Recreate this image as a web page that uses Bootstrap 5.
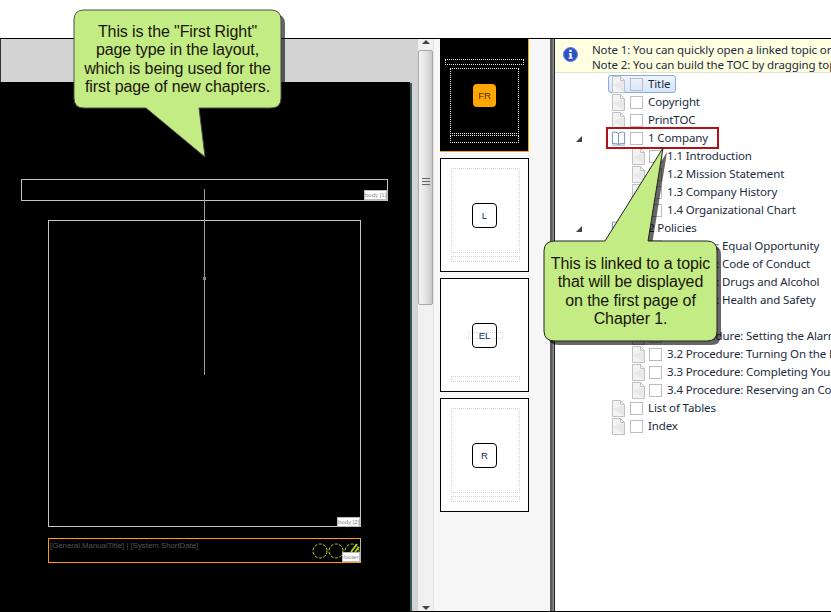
<!DOCTYPE html>
<html lang="en">
<head>
  <meta charset="UTF-8">
  <title>Page layout and TOC</title>
  <link href="https://cdn.jsdelivr.net/npm/bootstrap@5.3.0/dist/css/bootstrap.min.css" rel="stylesheet">
  <style>
    body { width: 831px; height: 612px; overflow: hidden; background: #fff; font-family: "Noto Sans", sans-serif; }
    .shot { width: 831px; height: 612px; position: relative; }
    .top-band { height: 38px; }
    .work { height: 574px; border-top: 1px solid #000; border-bottom: 1px solid #000; }

    /* layout canvas */
    .canvas-pane { width: 418px; background: #d3d3d3; position: relative; border-left: 1px solid #333; }
    .page-sheet { position: absolute; left: -1px; top: 43px; width: 410px; bottom: 0; background: #000; }
    .page-edge { position: absolute; left: 409px; top: 44px; width: 2px; bottom: 0; background: #2f5c5c; }
    .frame { position: absolute; border: 1px solid #c4c4c4; }
    .frame-header { left: 20px; top: 140px; width: 367px; height: 22px; }
    .frame-body { left: 47px; top: 181px; width: 313px; height: 307px; }
    .frame-footer { left: 47px; top: 499px; width: 313px; height: 25px; border-color: #ff9c00; border-right-color: #b5b5b5; }
    .v-guide { position: absolute; left: 203px; top: 150px; width: 1px; height: 186px; background: #9c9c9c; }
    .v-tick { position: absolute; left: 202px; top: 238px; width: 3px; height: 3px; background: #8a8a8a; }
    .tag { position: absolute; background: #fff; border: 1px solid #bbb; color: #8a8a8a; font: 6px/8px "Liberation Sans", sans-serif; text-align: center; white-space: nowrap; }
    .tag-h { left: 363px; top: 151px; width: 23px; height: 10px; }
    .tag-b { left: 336px; top: 478px; width: 23px; height: 10px; }
    .tag-f { left: 341px; top: 513px; width: 18px; height: 10px; }
    .foot-text { position: absolute; left: 49px; top: 502px; color: #555; font: 7.8px/10px "Liberation Sans", sans-serif; white-space: nowrap; }
    .foot-rings { position: absolute; left: 310px; top: 504px; }

    /* scrollbar */
    .vbar { width: 16px; background: #f0f0f0; position: relative; border-right: 1px solid #e4e4e4; }
    .vbar-thumb { position: absolute; left: 0; top: 11px; width: 15px; height: 255px; border: 1px solid #a8a8a8; border-radius: 2px; background: linear-gradient(90deg, #f4f4f4, #e2e2e2 55%, #c8c8c8); }
    .vbar-grip { position: absolute; left: 3px; top: 127px; width: 8px; height: 7px; border-top: 1px solid #666; border-bottom: 1px solid #666; }
    .vbar-grip::after { content: ""; display: block; height: 1px; margin-top: 2px; background: #666; }
    .arrow-up, .arrow-down { position: absolute; left: 4px; width: 0; height: 0; border-left: 4px solid transparent; border-right: 4px solid transparent; }
    .arrow-up { top: 1px; border-bottom: 4px solid #444; }
    .arrow-down { bottom: 1px; border-top: 4px solid #444; }

    /* page type thumbnails */
    .thumbs { width: 116px; background: #f7f7f7; padding-left: 6px; gap: 6px; }
    .thumb { width: 89px; height: 114px; background: #fff; border: 1px solid #000; position: relative; }
    .thumb-on { height: 113px; background: #000; border: 0; border-right: 1px solid #ffa500; border-bottom: 1px solid #ffa500; }
    .dots { position: absolute; border: 1px dotted #d4d4d4; }
    .thumb-on .dots { border-color: #e8e8e8; }
    .chip { position: absolute; left: 31px; top: 44px; width: 25px; height: 25px; border: 1px solid #000; border-radius: 4px; background: #fff; color: #103060; font: 9.5px/23px "Liberation Sans", sans-serif; text-align: center; }
    .chip-on { left: 33px; top: 45px; width: 23px; height: 23px; border: 0; background: #ffa500; color: #4a3000; }

    /* splitter */
    .splitter { width: 5px; background: linear-gradient(90deg, #5c5c5c 0 2px, #6e6e6e 2px 3px, #8c8c8c 3px 4px, #222 4px); }

    /* toc pane */
    .toc-pane { width: 276px; overflow: hidden; background: #fff; }
    .note-bar { height: 34px; background: #ffffe1; border-bottom: 1px solid #e4e4d0; padding: 3px 0 0 37px; position: relative; font-size: 11.5px; letter-spacing: -.12px; line-height: 15px; color: #1c2b3c; white-space: nowrap; }
    .note-icon { position: absolute; left: 8px; top: 8px; }
    .toc-list { padding-top: 2px; }
    .toc-row { height: 18px; position: relative; font-size: 11.5px; letter-spacing: -.12px; line-height: 18px; color: #1c2b3c; white-space: nowrap; display: flex; align-items: center; }
    .lvl-1 { padding-left: 57px; }
    .lvl-2 { padding-left: 77px; }
    .ico-doc { flex: none; margin-right: 4px; }
    .lvl-1 .ico-doc { margin-right: 5px; }
    .lvl-1 .ico-book { flex: none; margin-left: -1px; margin-right: 4px; }
    .box-mark { flex: none; width: 13px; height: 13px; border: 1px solid #bdbdbd; background: #fff; margin-right: 5px; }
    .twist { position: absolute; left: 21px; top: 7px; width: 0; height: 0; border-bottom: 6px solid #444; border-left: 6px solid transparent; }
    .sel-row::before { content: ""; position: absolute; left: 53px; top: 0; width: 68px; height: 18px; border: 1px solid #84acdd; border-radius: 3px; background: linear-gradient(#eef5fd, #d6e6f8); }
    .sel-row > * { position: relative; }
    .sel-row .box-mark { background: transparent; }
    .red-mark { position: absolute; left: 606px; top: 127px; width: 113px; height: 22px; border: 2px solid #b01217; }

    /* callouts */
    .bubble-art { position: absolute; left: 0; top: 0; }
    .bubble-text { position: absolute; text-align: center; font: 16px/18.3px "Liberation Sans", sans-serif; color: #1a1408; letter-spacing: -.1px; }
    .bubble-a { left: 74px; top: 23px; width: 207px; }
    .bubble-b { left: 544px; top: 255px; width: 173px; }
  </style>
</head>
<body>
  <svg width="0" height="0" class="position-absolute">
    <symbol id="doc" viewBox="0 0 13 17">
      <path d="M.5.5h8l4 4v12H.5z" fill="#f3f3f3" stroke="#c2c2c2"/>
      <path d="M8.5.5v4h4z" fill="#fff" stroke="#c2c2c2"/>
      <path d="M1 9l11 7V5z" fill="#e2e2e2" opacity=".7"/>
    </symbol>
    <symbol id="book" viewBox="0 0 16 17">
      <path d="M8 3C6 1.500 3.500 1.500 1.500 2v12c2-.5 4.500-.5 6.500 1 2-1.500 4.500-1.500 6.500-1V2C12.500 1.500 10 1.500 8 3z" fill="#fff" stroke="#6d8fae"/>
      <path d="M8 3v12" stroke="#6d8fae"/>
      <path d="M1 15.500h14" stroke="#8aa5bf"/>
    </symbol>
  </svg>

  <div class="shot">
    <div class="top-band"></div>
    <div class="work d-flex">
      <div class="canvas-pane">
        <div class="page-sheet"></div>
        <div class="page-edge"></div>
        <div class="frame frame-header"></div>
        <div class="frame frame-body"></div>
        <div class="frame frame-footer"></div>
        <div class="v-guide"></div>
        <div class="v-tick"></div>
        <div class="tag tag-h">body [1]</div>
        <div class="tag tag-b">body [2]</div>
        <div class="foot-text">[General.ManualTitle] | [System.ShortDate]</div>
        <svg class="foot-rings" width="50" height="16" fill="none" stroke="#b4d220" stroke-dasharray="3 1.500">
          <circle cx="9" cy="8" r="7"/><circle cx="25" cy="8" r="7"/><circle cx="41" cy="8" r="7"/>
          <path d="M40 9l6-8M44 9l4-5" stroke-dasharray="none" stroke-width="2"/>
        </svg>
        <div class="tag tag-f">footer</div>
      </div>

      <div class="vbar">
        <div class="arrow-up"></div>
        <div class="vbar-thumb"><div class="vbar-grip"></div></div>
        <div class="arrow-down"></div>
      </div>

      <div class="thumbs d-flex flex-column">
        <div class="thumb thumb-on">
          <div class="dots" style="left:5px;top:20px;width:79px;height:6px"></div>
          <div class="dots" style="left:10px;top:29px;width:69px;height:66px"></div>
          <div class="dots" style="left:10px;top:96px;width:69px;height:8px"></div>
          <div class="chip chip-on">FR</div>
        </div>
        <div class="thumb">
          <div class="dots" style="left:10px;top:9px;width:69px;height:85px"></div>
          <div class="dots" style="left:10px;top:97px;width:69px;height:6px"></div>
          <div class="chip">L</div>
        </div>
        <div class="thumb">
          <div class="dots" style="left:27px;top:53px;width:35px;height:7px"></div>
          <div class="dots" style="left:10px;top:97px;width:69px;height:6px"></div>
          <div class="chip bg-transparent">EL</div>
        </div>
        <div class="thumb">
          <div class="dots" style="left:10px;top:9px;width:69px;height:85px"></div>
          <div class="dots" style="left:10px;top:97px;width:69px;height:6px"></div>
          <div class="chip">R</div>
        </div>
      </div>

      <div class="splitter"></div>

      <div class="toc-pane">
        <div class="note-bar">
          <svg class="note-icon" width="15" height="15" viewBox="0 0 15 15">
            <circle cx="7.500" cy="7.500" r="7" fill="#2c52c4" stroke="#5f7fd8"/>
            <rect x="6.300" y="2.800" width="2.400" height="2.200" fill="#fff"/>
            <path d="M5.800 6.200h2.900v4.300h1v1.300H5.600v-1.300h1V7.500h-.8z" fill="#fff"/>
          </svg>
          <div>Note 1: You can quickly open a linked topic or</div>
          <div>Note 2: You can build the TOC by dragging topics</div>
        </div>
        <div class="toc-list">
          <div class="toc-row lvl-1 sel-row"><svg class="ico-doc" width="13" height="17"><use href="#doc"/></svg><span class="box-mark"></span><span>Title</span></div>
          <div class="toc-row lvl-1"><svg class="ico-doc" width="13" height="17"><use href="#doc"/></svg><span class="box-mark"></span><span>Copyright</span></div>
          <div class="toc-row lvl-1"><svg class="ico-doc" width="13" height="17"><use href="#doc"/></svg><span class="box-mark"></span><span>PrintTOC</span></div>
          <div class="toc-row lvl-1"><i class="twist"></i><svg class="ico-book" width="15" height="17"><use href="#book"/></svg><span class="box-mark"></span><span>1 Company</span></div>
          <div class="toc-row lvl-2"><svg class="ico-doc" width="13" height="17"><use href="#doc"/></svg><span class="box-mark"></span><span>1.1 Introduction</span></div>
          <div class="toc-row lvl-2"><svg class="ico-doc" width="13" height="17"><use href="#doc"/></svg><span class="box-mark"></span><span>1.2 Mission Statement</span></div>
          <div class="toc-row lvl-2"><svg class="ico-doc" width="13" height="17"><use href="#doc"/></svg><span class="box-mark"></span><span>1.3 Company History</span></div>
          <div class="toc-row lvl-2"><svg class="ico-doc" width="13" height="17"><use href="#doc"/></svg><span class="box-mark"></span><span>1.4 Organizational Chart</span></div>
          <div class="toc-row lvl-1"><i class="twist"></i><svg class="ico-book" width="15" height="17"><use href="#book"/></svg><span class="box-mark"></span><span>2 Policies</span></div>
          <div class="toc-row lvl-2"><svg class="ico-doc" width="13" height="17"><use href="#doc"/></svg><span class="box-mark"></span><span>2.1 Policy: Equal Opportunity</span></div>
          <div class="toc-row lvl-2"><svg class="ico-doc" width="13" height="17"><use href="#doc"/></svg><span class="box-mark"></span><span>2.2 Policy: Code of Conduct</span></div>
          <div class="toc-row lvl-2"><svg class="ico-doc" width="13" height="17"><use href="#doc"/></svg><span class="box-mark"></span><span>2.3 Policy: Drugs and Alcohol</span></div>
          <div class="toc-row lvl-2"><svg class="ico-doc" width="13" height="17"><use href="#doc"/></svg><span class="box-mark"></span><span>2.4 Policy: Health and Safety</span></div>
          <div class="toc-row lvl-1"><i class="twist"></i><svg class="ico-book" width="15" height="17"><use href="#book"/></svg><span class="box-mark"></span><span>3 Procedures</span></div>
          <div class="toc-row lvl-2"><svg class="ico-doc" width="13" height="17"><use href="#doc"/></svg><span class="box-mark"></span><span>3.1 Procedure: Setting the Alarm</span></div>
          <div class="toc-row lvl-2"><svg class="ico-doc" width="13" height="17"><use href="#doc"/></svg><span class="box-mark"></span><span>3.2 Procedure: Turning On the Lights</span></div>
          <div class="toc-row lvl-2"><svg class="ico-doc" width="13" height="17"><use href="#doc"/></svg><span class="box-mark"></span><span>3.3 Procedure: Completing Your Timesheet</span></div>
          <div class="toc-row lvl-2"><svg class="ico-doc" width="13" height="17"><use href="#doc"/></svg><span class="box-mark"></span><span>3.4 Procedure: Reserving an Conference Room</span></div>
          <div class="toc-row lvl-1"><svg class="ico-doc" width="13" height="17"><use href="#doc"/></svg><span class="box-mark"></span><span>List of Tables</span></div>
          <div class="toc-row lvl-1"><svg class="ico-doc" width="13" height="17"><use href="#doc"/></svg><span class="box-mark"></span><span>Index</span></div>
        </div>
      </div>
    </div>

    <div class="red-mark"></div>

    <!-- callouts sit over everything; shadows are see-through black -->
    <svg class="bubble-art" width="831" height="612">
      <path d="M84 10h187q10 0 10 10v78q0 10-10 10h-72l6 49-59-49H84q-10 0-10-10V20q0-10 10-10z" fill="#000" opacity=".6" transform="translate(4 4)"/>
      <path d="M84 10h187q10 0 10 10v78q0 10-10 10h-72l6 49-59-49H84q-10 0-10-10V20q0-10 10-10z" fill="#c3ec85" stroke="#4d4d4d"/>
      <path d="M555 241h50l58-93-15 93h59q10 0 10 10v80q0 10-10 10H555q-11 0-11-10v-80q0-10 11-10z" fill="#000" opacity=".6" transform="translate(4 4)"/>
      <path d="M555 241h50l58-93-15 93h59q10 0 10 10v80q0 10-10 10H555q-11 0-11-10v-80q0-10 11-10z" fill="#c3ec85" stroke="#222"/>
    </svg>
    <div class="bubble-text bubble-a">This is the "First Right"<br>page type in the layout,<br>which is being used for the<br>first page of new chapters.</div>
    <div class="bubble-text bubble-b">This is linked to a topic<br>that will be displayed<br>on the first page of<br>Chapter 1.</div>
  </div>

  <script src="https://cdn.jsdelivr.net/npm/bootstrap@5.3.0/dist/js/bootstrap.bundle.min.js"></script>
</body>
</html>
